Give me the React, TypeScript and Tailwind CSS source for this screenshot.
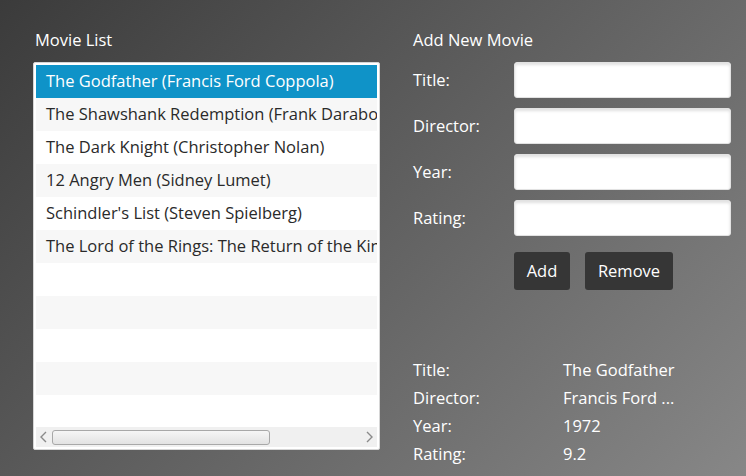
import React from "react";

const movies = [
  "The Godfather (Francis Ford Coppola)",
  "The Shawshank Redemption (Frank Darabont)",
  "The Dark Knight (Christopher Nolan)",
  "12 Angry Men (Sidney Lumet)",
  "Schindler's List (Steven Spielberg)",
  "The Lord of the Rings: The Return of the King (Peter Jackson)",
  "",
  "",
  "",
  "",
  "",
];

export default function App() {
  return (
    <div
      className="w-[746px] h-[476px] overflow-hidden bg-[linear-gradient(134deg,#3b3b3b_0%,#878787_100%)] text-white flex gap-[33px] pl-[33px] pt-[28px]"
      style={{ fontFamily: '"Open Sans", "Noto Sans", sans-serif' }}
    >
      <div className="flex flex-col w-[347px]">
        <div className="text-[16.5px] h-[34px] pl-[2px] leading-[24px]">Movie List</div>
        <div className="h-[388px] bg-white border border-[#d6d6d6] rounded-[2px] p-[2px] flex flex-col">
          <div className="flex-1 overflow-hidden">
            {movies.map((m, i) => (
              <div
                key={i}
                className={`h-[33px] pl-[10px] flex items-center whitespace-nowrap overflow-hidden text-[16.5px] ${
                  i === 0
                    ? "bg-[#0f93c8] text-white"
                    : i % 2 === 1
                    ? "bg-[#f7f7f7] text-[#2a2a2a]"
                    : "bg-white text-[#2a2a2a]"
                }`}
              >
                {m}
              </div>
            ))}
          </div>
          <div className="h-[20px] bg-[#f0f0f0] flex items-center px-[3px] gap-[3px]">
            <svg width="10" height="12" viewBox="0 0 10 12" className="shrink-0">
              <path d="M7 1 L2 6 L7 11" fill="none" stroke="#8a8a8a" strokeWidth="1.4" />
            </svg>
            <div className="w-[218px] h-[15px] rounded-[3px] border border-[#a8a8a8] bg-[linear-gradient(#f6f6f6,#e2e2e2)]" />
            <div className="flex-1" />
            <svg width="10" height="12" viewBox="0 0 10 12" className="shrink-0">
              <path d="M3 1 L8 6 L3 11" fill="none" stroke="#8a8a8a" strokeWidth="1.4" />
            </svg>
          </div>
        </div>
      </div>
      <div className="flex flex-col w-[318px]">
        <div className="text-[16.5px] h-[34px] leading-[24px]">Add New Movie</div>
        <div className="flex flex-col gap-[10px]">
          {["Title:", "Director:", "Year:", "Rating:"].map((l) => (
            <div key={l} className="flex items-center h-[36px]">
              <div className="w-[101px] text-[16.5px]">{l}</div>
              <div className="w-[217px] h-[36px] bg-white rounded-[3px] border border-[#e2e2e2] shadow-[inset_0_2px_3px_rgba(0,0,0,0.12)]" />
            </div>
          ))}
        </div>
        <div className="flex gap-[15px] pl-[101px] mt-[16px]">
          <div className="h-[38px] w-[56px] rounded-[3px] bg-[#363636] flex items-center justify-center text-[16.5px]">Add</div>
          <div className="h-[38px] w-[88px] rounded-[3px] bg-[#363636] flex items-center justify-center text-[16.5px]">Remove</div>
        </div>
        <div className="mt-[68px] grid grid-cols-[150px_1fr] gap-y-[4px] text-[16.5px] leading-[24px]">
          <div>Title:</div>
          <div>The Godfather</div>
          <div>Director:</div>
          <div>Francis Ford ...</div>
          <div>Year:</div>
          <div>1972</div>
          <div>Rating:</div>
          <div>9.2</div>
        </div>
      </div>
    </div>
  );
}
